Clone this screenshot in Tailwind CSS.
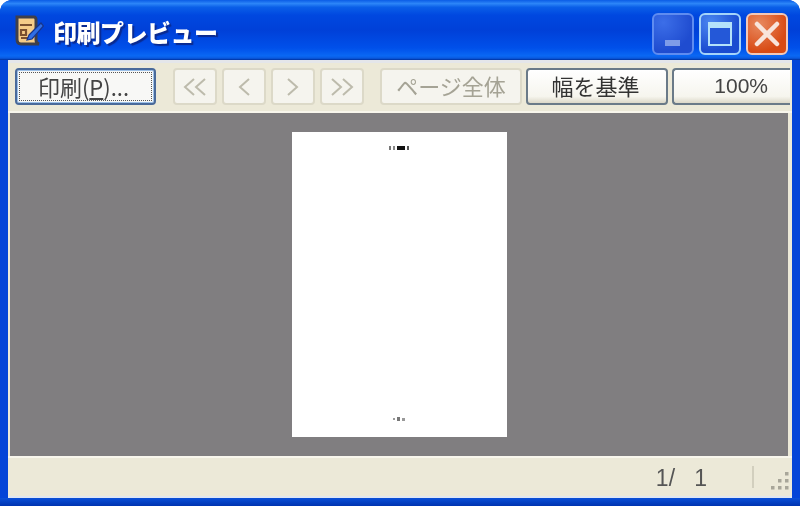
<!DOCTYPE html>
<html lang="ja">
<head>
  <meta charset="UTF-8" />
  <title>印刷プレビュー</title>
  <script src="https://cdn.jsdelivr.net/npm/@tailwindcss/browser@4"></script>
</head>
<body class="w-[800px] h-[506px] overflow-hidden bg-white font-['Noto_Sans_CJK_JP','Liberation_Sans',sans-serif]">
  <div class="w-[800px] h-[506px] flex flex-col rounded-t-[12px] overflow-hidden bg-[#0344d8] blur-[0.6px]">

    <!-- title bar -->
    <div class="h-[60px] shrink-0 flex items-center pl-[14px] pr-[12px] bg-[linear-gradient(180deg,#0a5ce6_0%,#2c86f8_6%,#0a5fe8_12%,#0048e0_25%,#0040d8_50%,#0050ea_80%,#0a68f4_93%,#0a5ae0_97%,#00309c_100%)]">
      <svg class="w-[30px] h-[32px] mt-[2px]" viewBox="0 0 30 32">
        <path d="M3 2h17q2 0 2 3v20q0 3 3 4H7q-4 0-4-5z" fill="#f5cc88" stroke="#3f3f4a" stroke-width="3"/>
        <path d="M6 10h12M7 15h5v5h-5zM7 23h11" fill="none" stroke="#7a5030" stroke-width="2.2"/>
        <path d="M15 20L27 8l2.500 3L18 24l-5 1z" fill="#2f6ee6" stroke="#16348c" stroke-width="1.200"/>
      </svg>
      <div class="ml-[9px] mt-[3px] text-[24px] leading-none font-black text-white tracking-[-0.5px] [text-shadow:2px_2px_1px_#0a2a90]">印刷プレビュー</div>
      <div class="ml-auto flex gap-[5px] mt-[8px]">
        <div class="w-[42px] h-[42px] rounded-[6px] border-2 border-[#5f8cf0] bg-[radial-gradient(circle_at_25%_20%,#3c6ee8,#1f4cd0_70%)] flex items-end justify-center pb-[7px] pr-[2px]">
          <div class="w-[15px] h-[6px] bg-[#7f9ce8]"></div>
        </div>
        <div class="w-[42px] h-[42px] rounded-[6px] border-2 border-[#a4d4fa] bg-[radial-gradient(circle_at_25%_20%,#4a86f0,#1a4cd0_70%)] flex items-center justify-center">
          <div class="w-[24px] h-[24px] border-2 border-t-[6px] border-[#b4e2fa] bg-[#2458d8]"></div>
        </div>
        <div class="w-[42px] h-[42px] rounded-[6px] border-2 border-[#f2c8b8] bg-[radial-gradient(circle_at_30%_25%,#e88a60,#d84a14_70%)] flex items-center justify-center">
          <svg class="w-[26px] h-[26px]" viewBox="0 0 26 26"><path d="M3 3l20 20M23 3L3 23" stroke="#f8e4da" stroke-width="4.500" stroke-linecap="round"/></svg>
        </div>
      </div>
    </div>

    <!-- window body -->
    <div class="flex-1 min-h-0 ml-[8px] mr-[8px] flex flex-col bg-[#ece9d8]">

      <!-- toolbar -->
      <div class="h-[53px] shrink-0 flex items-start pt-[5px] pl-[7px] border-t-[3px] border-t-[#e4e6ea] border-b-[2px] border-b-[#f8f6ec] text-[#222]">
        <button class="w-[141px] h-[37px] rounded-[4px] border-2 border-[#4a6a9a] bg-[#f8f8f6] p-[2px] shadow-[inset_0_0_0_1px_#9cc0e8]">
          <span class="w-full h-full flex items-center justify-center pb-[2px] pr-[4px] border border-dotted border-[#555] text-[22px] leading-none text-[#444]">印刷(<span class="underline underline-offset-2">P</span>)...</span>
        </button>
        <div class="ml-[17px] flex gap-[5px] text-[#a5a395]">
          <button class="w-[44px] h-[37px] rounded-[4px] border-2 border-[#dcd9c8] bg-[#f5f4ee] flex items-center justify-center">
            <svg class="w-[26px] h-[22px]" viewBox="0 0 26 22" fill="none" stroke="#bdbbac" stroke-width="2"><path d="M12 3L3 11l9 8M23 3l-9 8 9 8"/></svg>
          </button>
          <button class="w-[44px] h-[37px] rounded-[4px] border-2 border-[#dcd9c8] bg-[#f5f4ee] flex items-center justify-center">
            <svg class="w-[14px] h-[22px]" viewBox="0 0 14 22" fill="none" stroke="#bdbbac" stroke-width="2"><path d="M12 3l-9 8 9 8"/></svg>
          </button>
          <button class="w-[44px] h-[37px] rounded-[4px] border-2 border-[#dcd9c8] bg-[#f5f4ee] flex items-center justify-center">
            <svg class="w-[14px] h-[22px]" viewBox="0 0 14 22" fill="none" stroke="#bdbbac" stroke-width="2"><path d="M2 3l9 8-9 8"/></svg>
          </button>
          <button class="w-[44px] h-[37px] rounded-[4px] border-2 border-[#dcd9c8] bg-[#f5f4ee] flex items-center justify-center">
            <svg class="w-[26px] h-[22px]" viewBox="0 0 26 22" fill="none" stroke="#bdbbac" stroke-width="2"><path d="M3 3l9 8-9 8M14 3l9 8-9 8"/></svg>
          </button>
        </div>
        <button class="ml-[16px] w-[142px] h-[37px] rounded-[4px] border-2 border-[#dcd9c8] bg-[#f5f4ee] pb-[3px] text-[22px] leading-none text-[#a5a395]">ページ全体</button>
        <button class="ml-[4px] w-[142px] h-[37px] rounded-[4px] border-2 border-[#6a7a88] bg-[linear-gradient(180deg,#fff,#f6f5ee_80%,#dcd8c8)] pb-[3px] pr-[3px] text-[22px] leading-none text-[#333]">幅を基準</button>
        <button class="ml-[4px] w-[118px] h-[37px] shrink-0 rounded-l-[4px] border-2 border-r-0 border-[#6a7a88] bg-[linear-gradient(180deg,#fff,#f6f5ee_80%,#dcd8c8)] pb-[3px] text-[21px] leading-none text-[#444] text-right pr-[22px] font-['Liberation_Sans',sans-serif]">100%</button>
      </div>

      <!-- preview area -->
      <div class="flex-1 min-h-0 ml-[2px] mr-[4px] flex justify-center pt-[19px] bg-[#807e80]">
        <div class="w-[215px] h-[305px] bg-white flex flex-col items-center justify-between pt-[14px] pb-[16px]">
          <div class="flex items-center gap-[2px] h-[4px]">
            <div class="w-[2px] h-[4px] bg-[#777]"></div>
            <div class="w-[2px] h-[4px] bg-[#888]"></div>
            <div class="w-[8px] h-[4px] bg-[#111]"></div>
            <div class="w-[2px] h-[4px] bg-[#555]"></div>
          </div>
          <div class="flex items-center gap-[2px] h-[4px]">
            <div class="w-[2px] h-[2px] bg-[#999]"></div>
            <div class="w-[3px] h-[4px] bg-[#777]"></div>
            <div class="w-[3px] h-[3px] bg-[#999]"></div>
          </div>
        </div>
      </div>

      <!-- status bar -->
      <div class="h-[42px] shrink-0 flex items-stretch border-t-[2px] border-t-[#f8f6ec] border-b-[2px] border-b-[#dfe6f2] text-[#555]">
        <div class="flex-1 flex items-center justify-end pt-[3px] pr-[45px] text-[23px] leading-none font-['Liberation_Sans',sans-serif] whitespace-pre">1/   1</div>
        <div class="w-[2px] my-[8px] bg-[#d2cfbe]"></div>
        <div class="w-[38px] flex items-end justify-end pr-[2px] pb-[5px]">
          <svg class="w-[20px] h-[20px]" viewBox="0 0 20 20" fill="#a8a699"><rect x="15" y="1" width="3.500" height="3.500"/><rect x="8" y="8" width="3.500" height="3.500"/><rect x="15" y="8" width="3.500" height="3.500"/><rect x="1" y="15" width="3.500" height="3.500"/><rect x="8" y="15" width="3.500" height="3.500"/><rect x="15" y="15" width="3.500" height="3.500"/></svg>
        </div>
      </div>
    </div>

    <!-- bottom frame edge -->
    <div class="h-[8px] shrink-0 bg-[linear-gradient(180deg,#0a50d8,#0034b0)]"></div>
  </div>
</body>
</html>
